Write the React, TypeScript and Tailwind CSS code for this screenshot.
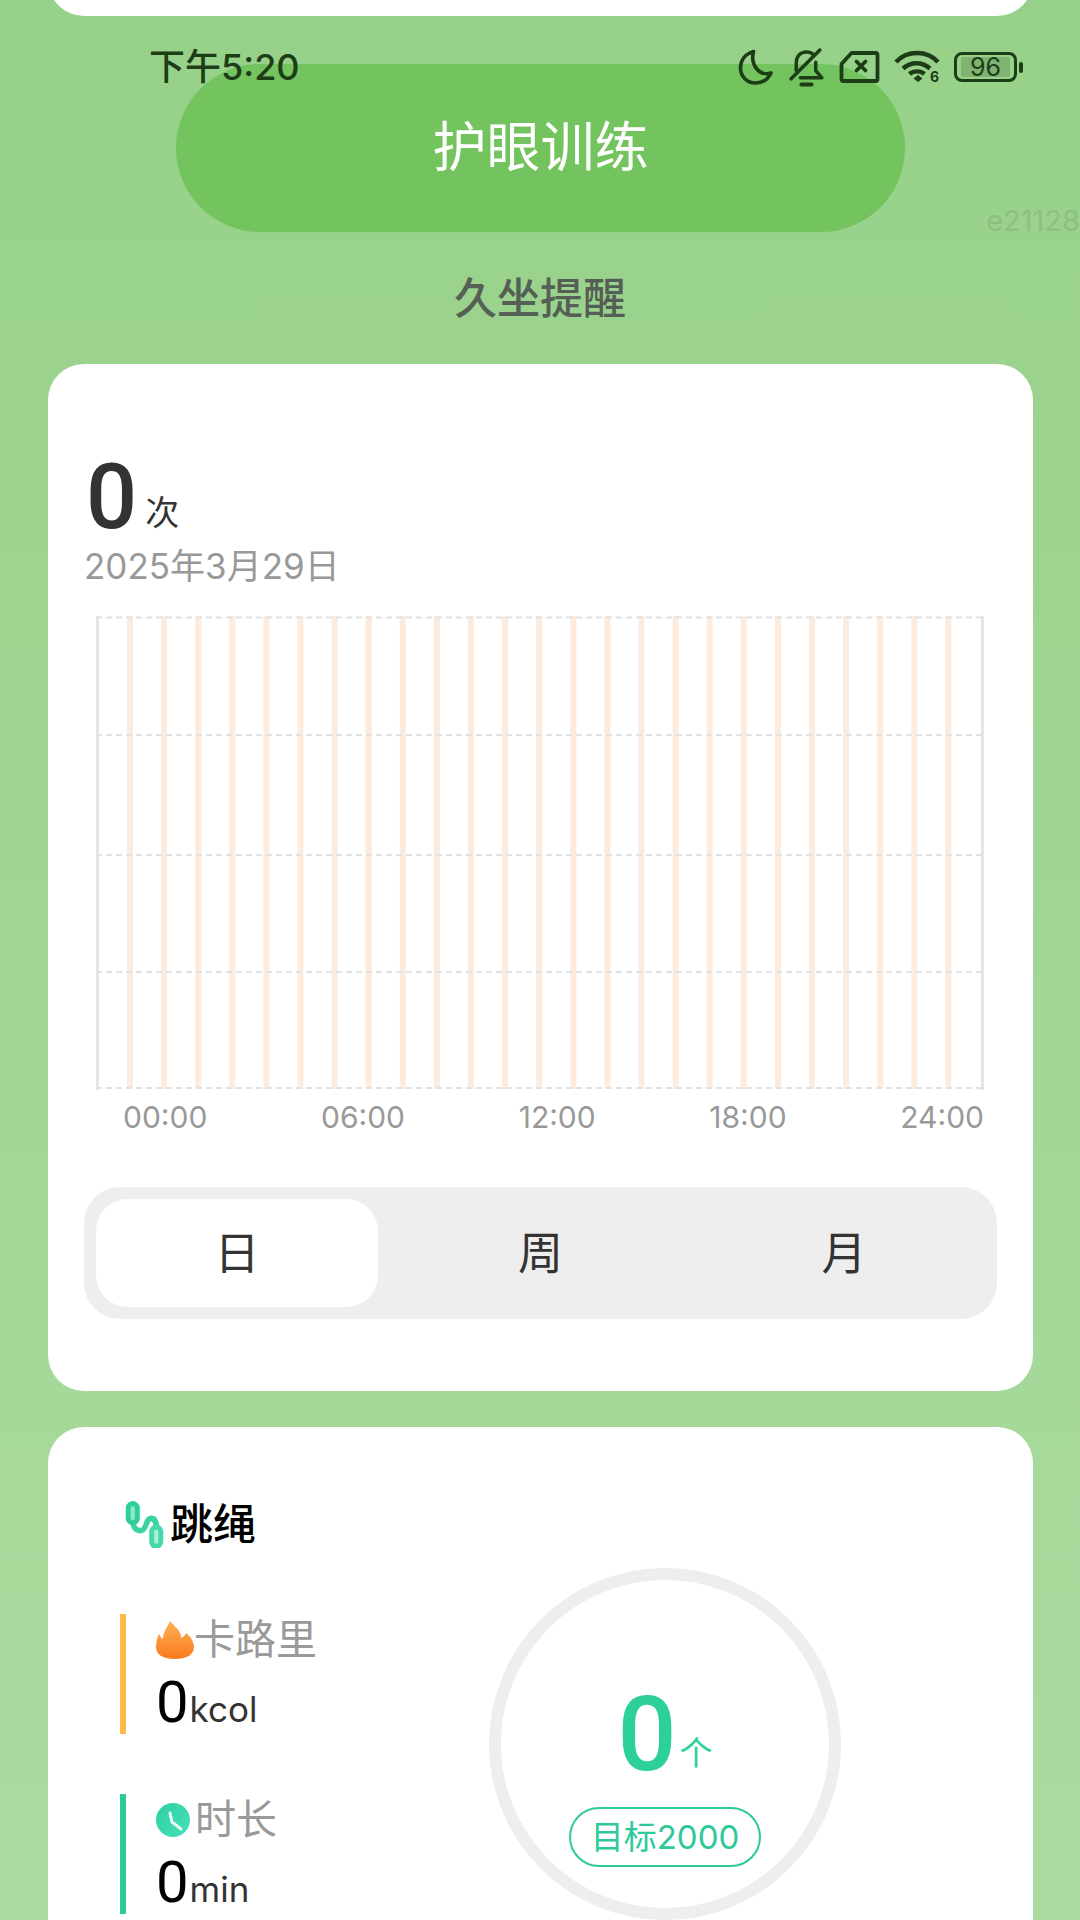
import React from "react";

const FONT = "font-['Inter','Noto_Sans_CJK_SC',sans-serif]";
const BIG_DIGIT = "font-['Roboto',sans-serif] font-medium";
const SMALL_DIGIT = "font-['Roboto',sans-serif]";

const barXs = Array.from({ length: 25 }, (_, i) => 34 + i * 34.1);

const MoonIcon = () => (
  <svg width="36" height="36" viewBox="0 0 35 36" fill="none" stroke="#1c3d16" strokeWidth="3.6" strokeLinejoin="round">
    <path d="M15 2.5C7 5 2 11 2 19c0 8.500 6.500 15 15 15 7 0 12.500-3.500 15.500-10-11 3.500-21-7-17.500-21.500Z" />
  </svg>
);

const BellOffIcon = () => (
  <svg width="37" height="39" viewBox="0 0 36 38" fill="none" stroke="#1c3d16" strokeWidth="3.4" strokeLinecap="round" strokeLinejoin="round">
    <path d="M8 22V15C8 8 12 4 18 4c3 0 5.500 1 7 3" />
    <path d="M27 14v8l6 7H12" />
    <path d="M3 30 31 2" />
    <path d="M13 35.500h10" strokeWidth="3.800" />
  </svg>
);

const SimIcon = () => (
  <svg width="41" height="32" viewBox="0 0 40 32" fill="none" stroke="#1c3d16" strokeWidth="3.800" strokeLinejoin="round" strokeLinecap="round">
    <path d="M12 2h24a2 2 0 0 1 2 2v24a2 2 0 0 1-2 2H4a2 2 0 0 1-2-2V13Z" />
    <path d="M17 10.500 26 19.500M26 10.500 17 19.500" />
  </svg>
);

const WifiIcon = () => (
  <svg width="46" height="34" viewBox="0 0 46 34" fill="none" stroke="#1c3d16" strokeWidth="4.4">
    <path d="M2 12C13 0 33 0 44 12" />
    <path d="M9 18.500c8-7 19-7 27 0" />
    <path d="M15.500 24c4-3.500 11-3.500 15 0" />
    <path d="M24 25l4.500 3.500-4.500 3.500-4.500-3.500Z" fill="#1c3d16" stroke="none" />
    <text x="36" y="32" fontSize="14" fontWeight="700" fill="#1c3d16" stroke="none">
      6
    </text>
  </svg>
);

const BatteryIcon = () => (
  <div className="flex items-center gap-[2px]">
    <div className="flex h-[30px] w-[63px] items-stretch rounded-[8px] border-[3px] border-[#1c3d16] px-[4px] py-[2px]">
      <div className="flex w-full items-center justify-center rounded-[2px] bg-[#1c3d16]/20 text-[25px] leading-none text-[#1c3d16]">
        96
      </div>
    </div>
    <div className="h-[11px] w-[4px] rounded-full bg-[#1c3d16]" />
  </div>
);

const RopeIcon = () => (
  <svg width="42" height="47" viewBox="0 0 40 46" fill="none" strokeLinecap="round">
    <path d="M8 20c1 7 3 9 8 9 6 0 4-12 10-12 5 0 5 6 6 12" stroke="#3bd3a2" strokeWidth="5.400" />
    <rect x="3.500" y="2.500" width="9" height="19" rx="4.500" stroke="#2fcf9b" strokeWidth="4.800" fill="#8fe8c8" />
    <rect x="26.500" y="25.500" width="9" height="19" rx="4.500" stroke="#45d8aa" strokeWidth="4.800" fill="#a6eed4" />
  </svg>
);

const FireIcon = () => (
  <svg width="38" height="38" viewBox="0 0 38 38">
    <defs>
      <linearGradient id="fire" x1="0" y1="0" x2="0" y2="1">
        <stop offset="0" stopColor="#fdb256" />
        <stop offset="1" stopColor="#f97a1c" />
      </linearGradient>
    </defs>
    <path
      d="M14 0c3 4 8 7 10 12 1 2 1 3 1 5 3-1 4-3 5-5 5 4 8 9 8 14 0 7-6 12-19 12S0 33 0 26c0-5 1-9 3-13 1 2 2 4 4 5 0-7 4-11 7-18Z"
      fill="url(#fire)"
    />
  </svg>
);

const ClockIcon = () => (
  <svg width="34" height="34" viewBox="0 0 34 34">
    <defs>
      <linearGradient id="clock" x1="0" y1="0" x2="1" y2="1">
        <stop offset="0" stopColor="#2fd0a0" />
        <stop offset="1" stopColor="#47e0bb" />
      </linearGradient>
    </defs>
    <circle cx="17" cy="17" r="17" fill="url(#clock)" />
    <path d="M14 10l2 9 9 7" fill="none" stroke="#e8fbf4" strokeWidth="3" strokeLinecap="round" strokeLinejoin="round" />
  </svg>
);

const Chart = () => (
  <svg width="888" height="474" viewBox="0 0 888 474" className="block">
    {barXs.map((x) => (
      <rect key={x} x={x - 3} y="0" width="6" height="473" fill="#fdecde" />
    ))}
    <rect x="0" y="0" width="3" height="474" fill="#e6e6e6" />
    <rect x="885" y="0" width="3" height="474" fill="#e6e6e6" />
    {[1.5, 119, 239, 356, 472].map((y) => (
      <line key={y} x1="0" x2="888" y1={y} y2={y} stroke="#e2e2e2" strokeWidth="2" strokeDasharray="6 4" />
    ))}
  </svg>
);

const Stat = ({
  barColor,
  icon,
  label,
  unit,
  gap,
}: {
  barColor: string;
  icon: React.ReactNode;
  label: string;
  unit: string;
  gap: string;
}) => (
  <div className={`flex h-[120px] border-l-[6px] pl-[30px] ${barColor}`}>
    <div className="flex flex-col">
      <div className="flex h-[58px] items-center text-[41px] leading-none text-[#999999]">
        {icon}
        <span className={gap}>{label}</span>
      </div>
      <div className="mt-[5px] flex items-baseline">
        <span className={`text-[58px] leading-[64px] text-black ${SMALL_DIGIT}`}>0</span>
        <span className="ml-[1px] text-[35px] leading-none text-[#333333]">{unit}</span>
      </div>
    </div>
  </div>
);

export default function App() {
  return (
    <div className={`relative h-[1920px] w-[1080px] overflow-hidden bg-gradient-to-b from-[#97d189] to-[#aadb9f] ${FONT}`}>
      {/* status bar */}
      <div className="absolute left-0 right-0 top-[47px] z-10 flex h-[40px] items-center justify-between pl-[149px] pr-[57px] text-[#1c3d16]">
        <span className="text-[36px] font-medium leading-none">下午5:20</span>
        <div className="flex items-center gap-[14px]">
          <MoonIcon />
          <BellOffIcon />
          <SimIcon />
          <WifiIcon />
          <BatteryIcon />
        </div>
      </div>

      <span className="absolute right-0 top-[203px] text-[29px] leading-[36px] text-[#8dbf85]">e21128</span>

      <div className="ml-[48px] -mt-[20px] h-[36px] w-[985px] rounded-b-[36px] bg-white" />

      <div className="ml-[176px] mt-[48px] flex h-[168px] w-[729px] items-center justify-center rounded-full bg-[#73c35f] text-[54px] leading-none text-white">
        护眼训练
      </div>

      <div className="flex h-[132px] items-center justify-center text-[43px] font-medium leading-none text-[#555f55]">久坐提醒</div>

      <div className="ml-[48px] h-[1027px] w-[985px] rounded-[36px] bg-white pl-[36px] pr-[36px] pt-[88px]">
        <div className="flex items-end pl-[2px] leading-none text-[#333333]">
          <span className={`text-[90px] leading-[92px] ${BIG_DIGIT}`}>0</span>
          <span className="mb-[14px] ml-[8px] text-[34px] leading-none">次</span>
        </div>
        <div className="text-[35px] leading-[44px] text-[#999999]">2025年3月29日</div>
        <div className="ml-[12px] mt-[28px] w-[888px]">
          <Chart />
          <div className="mt-[9px] flex justify-between pl-[27px] text-[30px] leading-[36px] text-[#999999]">
            <span>00:00</span>
            <span>06:00</span>
            <span>12:00</span>
            <span>18:00</span>
            <span>24:00</span>
          </div>
        </div>
        <div className="mt-[52px] flex h-[132px] w-[913px] justify-between rounded-[36px] bg-[#eeeeee] p-[12px] text-[45px] leading-none text-[#333333]">
          <div className="flex w-[282px] items-center justify-center rounded-[32px] bg-white">日</div>
          <div className="flex w-[282px] items-center justify-center">周</div>
          <div className="flex w-[282px] items-center justify-center">月</div>
        </div>
      </div>

      <div className="ml-[48px] mt-[36px] h-[600px] w-[985px] rounded-[36px] bg-white pl-[72px] pt-[73px]">
        <div className="flex h-[48px] items-center pl-[4px] text-[43px] font-medium leading-none text-black">
          <RopeIcon />
          <span className="ml-[4px]">跳绳</span>
        </div>
        <div className="flex">
          <div className="mt-[66px] flex w-[369px] flex-col gap-[60px]">
            <Stat barColor="border-[#fdb944]" icon={<FireIcon />} label="卡路里" unit="kcol" gap="ml-0" />
            <Stat barColor="border-[#2ecb94]" icon={<ClockIcon />} label="时长" unit="min" gap="ml-[5px]" />
          </div>
          <div className="mt-[20px] flex h-[352px] w-[352px] flex-col items-center rounded-full border-[12px] border-[#eeeeee]">
            <div className="mt-[103px] flex items-end text-[#2dd197]">
              <span className={`text-[104px] leading-[104px] ${BIG_DIGIT}`}>0</span>
              <span className="mb-[17px] ml-[3px] text-[33px] leading-none">个</span>
            </div>
            <div className="mt-[20px] flex h-[60px] w-[192px] items-center justify-center rounded-full border-2 border-[#2ec99a] text-[33px] leading-none text-[#2ec99a]">
              目标2000
            </div>
          </div>
        </div>
      </div>
    </div>
  );
}
